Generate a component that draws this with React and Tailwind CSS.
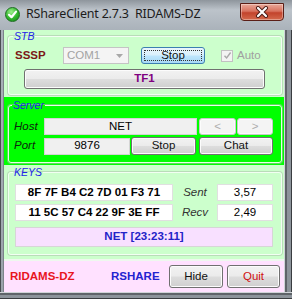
import React from "react";

const F = { fontFamily: '"Liberation Sans", Arial, sans-serif' };

function Btn({ className = "", children, textClass = "text-[#111]" }) {
  return (
    <div
      className={`flex items-center justify-center rounded-[3px] border border-[#707070] bg-[linear-gradient(180deg,#f2f2f2_0%,#ebebeb_48%,#dddddd_52%,#cfcfcf_100%)] shadow-[inset_0_0_0_1px_#fcfcfc] text-[11.5px] ${textClass} ${className}`}
    >
      {children}
    </div>
  );
}

function Legend({ children }) {
  return (
    <legend className="-ml-[2px] px-[1px] text-[10.5px] leading-[12px] italic text-[#2323e8]">
      {children}
    </legend>
  );
}

function Box({ className = "", children }) {
  return (
    <div
      className={`flex items-center justify-center border border-[#d4d4d4] text-[11.5px] text-black ${className}`}
    >
      {children}
    </div>
  );
}

export default function App() {
  return (
    <div
      className="w-[292px] h-[299px] bg-[linear-gradient(180deg,#8e959c_0px,#bcc3ca_10px,#aab2ba_30px,#9aa2aa_100%)] flex flex-col overflow-hidden"
      style={F}
    >
      {/* Title bar */}
      <div className="h-[30px] flex items-start">
        <div className="mt-[7px] ml-[5px] w-[15px] h-[15px] rounded-full bg-[radial-gradient(circle_at_40%_30%,#9cf08c_0%,#2fb52a_55%,#17801a_100%)] border border-[#1b6e1f] flex items-center justify-center">
          <svg width="11" height="11" viewBox="0 0 11 11">
            <path d="M2 5.8 L4.5 8.2 L9 2.6" stroke="#fff" strokeWidth="2.2" fill="none" strokeLinecap="round" strokeLinejoin="round" />
          </svg>
        </div>
        <div className="ml-[6px] mt-[6px] text-[12.5px] leading-[16px] text-[#1c1c1c]" style={{ fontFamily: '"Noto Sans", "Open Sans", sans-serif', letterSpacing: "-0.2px" }}>
          RShareClient 2.7.3&nbsp;&nbsp;RIDAMS-DZ
        </div>
        <div className="ml-auto mr-[8px] mt-[3px] w-[44px] h-[18px] rounded-b-[4px] border border-[#5b1e16] bg-[linear-gradient(180deg,#e9a99a_0%,#d8725e_45%,#c2432c_55%,#d46a4d_100%)] flex items-center justify-center shadow-[inset_0_0_0_1px_rgba(255,255,255,0.35)]">
          <svg width="14" height="12" viewBox="0 0 14 12">
            <path d="M3 2 L11 10 M11 2 L3 10" stroke="#4a1a14" strokeWidth="4" strokeLinecap="round" />
            <path d="M3 2 L11 10 M11 2 L3 10" stroke="#fff" strokeWidth="2.2" strokeLinecap="round" />
          </svg>
        </div>
      </div>

      {/* Client row */}
      <div className="flex">
        <div className="w-[4px] flex">
          <div className="w-[1px] bg-[#4a4e52]" />
          <div className="flex-1" />
          <div className="w-[1px] bg-[#7c838a]" />
        </div>
        <div className="w-[280px] h-[262px] flex flex-col bg-[#ccffcc]">
          {/* STB */}
          <div className="h-[67px] flex flex-col">
            <fieldset className="ml-[4px] mr-[2px] h-[65px] border border-[#f2fff2] rounded-[3px] shadow-[0_0_0_1px_#b9dcb9] pl-[6px]">
              <Legend>STB</Legend>
              <div className="mt-[5px] h-[17px] flex items-center">
                <span className="w-[48px] text-[11.5px] font-bold text-[#7b1717]">SSSP</span>
                <div className="w-[66px] h-[17px] border border-[#c4c4c4] bg-[#f4f4f4] flex items-center pl-[3px] text-[11.5px] text-[#a3a3a3]">
                  <span>COM1</span>
                  <svg className="ml-auto mr-[5px]" width="7" height="4" viewBox="0 0 7 4">
                    <path d="M0 0 L7 0 L3.5 4 Z" fill="#a8a8a8" />
                  </svg>
                </div>
                <div className="ml-[12px] w-[64px] h-[17px] rounded-[3px] border border-[#3c7fb1] bg-[linear-gradient(180deg,#eaf6fd_0%,#d9f0fc_48%,#bee6fd_52%,#a7d9f5_100%)] flex items-center justify-center p-[2px]">
                  <div className="w-full h-full border border-dotted border-[#333] flex items-center justify-center text-[11.5px] text-[#111]">
                    Stop
                  </div>
                </div>
                <div className="ml-[16px] w-[12px] h-[12px] border border-[#c2c2c2] bg-[#f3f3f3] flex items-center justify-center">
                  <svg width="9" height="9" viewBox="0 0 9 9">
                    <path d="M1.5 4.8 L3.6 7 L7.6 1.5" stroke="#a9a9a9" strokeWidth="1.4" fill="none" />
                  </svg>
                </div>
                <span className="ml-[4px] text-[11.5px] text-[#a0a0a0]">Auto</span>
              </div>
              <Btn className="mt-[5px] ml-[9px] w-[241px] h-[20px]" textClass="text-[#800080] font-bold">
                TF1
              </Btn>
            </fieldset>
          </div>

          {/* Server */}
          <div className="h-[68px] bg-[#00ff00] pt-[2px]">
            <fieldset className="ml-[4px] mr-[2px] h-[64px] border border-[#e6ffe6] rounded-[3px] shadow-[0_0_0_1px_#5ed85e] pl-[5px]">
              <Legend>Server</Legend>
              <div className="mt-[7px] h-[17px] flex items-center">
                <span className="w-[30px] text-[11.5px] italic text-[#0d260d]">Host</span>
                <Box className="w-[153px] h-[17px] bg-[#f0f0f0]">NET</Box>
                <Btn className="ml-[2px] w-[37px] h-[17px] border-[#c9c9c9] bg-[#f4f4f4] bg-none" textClass="text-[#adadad]">&lt;</Btn>
                <Btn className="ml-[1px] w-[36px] h-[17px] border-[#c9c9c9] bg-[#f4f4f4] bg-none" textClass="text-[#adadad]">&gt;</Btn>
              </div>
              <div className="mt-[2px] h-[18px] flex items-center">
                <span className="w-[30px] text-[11.5px] italic text-[#0d260d]">Port</span>
                <Box className="w-[86px] h-[17px] bg-[#f0f0f0]">9876</Box>
                <Btn className="ml-[1px] w-[65px] h-[18px]">Stop</Btn>
                <Btn className="ml-[3px] w-[74px] h-[18px]">Chat</Btn>
              </div>
            </fieldset>
          </div>

          {/* KEYS */}
          <div className="h-[94px] pt-[1px]">
            <fieldset className="ml-[4px] mr-[2px] h-[89px] border border-[#f2fff2] rounded-[3px] shadow-[0_0_0_1px_#b9dcb9] pl-[6px]">
              <Legend>KEYS</Legend>
              <div className="mt-[6px] h-[17px] flex items-center">
                <Box className="w-[158px] h-[17px] bg-white font-bold border-[#e0e0e0]">8F 7F B4 C2 7D 01 F3 71</Box>
                <span className="w-[44px] text-center text-[11.5px] italic text-[#333]">Sent</span>
                <Box className="w-[56px] h-[17px] bg-white border-[#e0e0e0]">3,57</Box>
              </div>
              <div className="mt-[3px] h-[17px] flex items-center">
                <Box className="w-[158px] h-[17px] bg-white font-bold border-[#e0e0e0]">11 5C 57 C4 22 9F 3E FF</Box>
                <span className="w-[44px] text-center text-[11.5px] italic text-[#333]">Recv</span>
                <Box className="w-[56px] h-[17px] bg-white border-[#e0e0e0]">2,49</Box>
              </div>
              <div className="mt-[6px] w-[258px] h-[20px] bg-[#f8e0ff] border border-[#d6d6d6] flex items-center justify-center text-[11.5px] font-bold text-[#2323c8]">
                NET [23:23:11]
              </div>
            </fieldset>
          </div>

          {/* Bottom strip */}
          <div className="h-[33px] border-t-2 border-[#eef8ee] bg-[#ffe1ff] flex items-center">
            <span className="ml-[6px] w-[101px] text-[11.5px] font-bold text-[#e8141e]">RIDAMS-DZ</span>
            <span className="w-[58px] text-[11.5px] font-bold text-[#2323d0]">RSHARE</span>
            <Btn className="w-[54px] h-[23px]">Hide</Btn>
            <Btn className="ml-[4px] w-[53px] h-[23px]" textClass="text-[#d01010]">Quit</Btn>
          </div>
        </div>
        <div className="flex-1 flex">
          <div className="w-[1px] bg-[#d0d4d8]" />
          <div className="w-[2px] bg-[#5f6469]" />
          <div className="flex-1 bg-[#8d949b]" />
          <div className="w-[1px] bg-[#3a3d40]" />
        </div>
      </div>
      {/* Bottom frame */}
      <div className="flex-1 flex flex-col">
        <div className="h-[1px] bg-[#d0d4d8]" />
        <div className="h-[2px] bg-[#5f6469]" />
        <div className="flex-1 bg-[#8d949b]" />
        <div className="h-[1px] bg-[#3a3d40]" />
      </div>
    </div>
  );
}
